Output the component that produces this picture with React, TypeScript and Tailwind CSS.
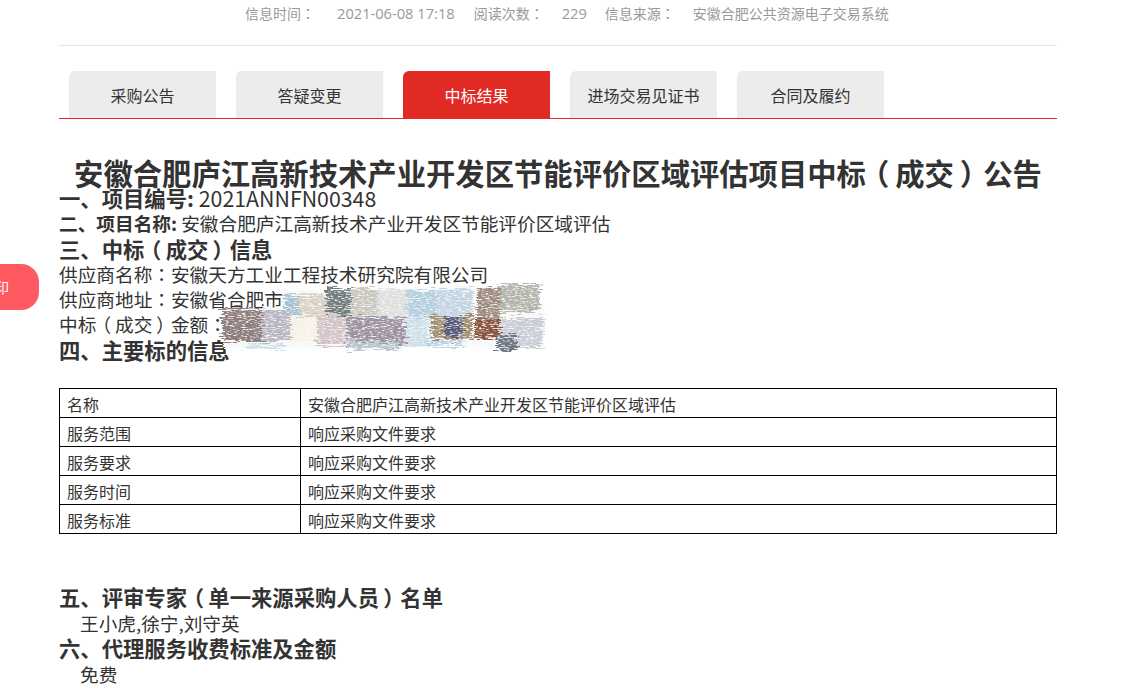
const tabs = ['采购公告', '答疑变更', '中标结果', '进场交易见证书', '合同及履约'];
const rows = [
  ['名称', '安徽合肥庐江高新技术产业开发区节能评价区域评估'],
  ['服务范围', '响应采购文件要求'],
  ['服务要求', '响应采购文件要求'],
  ['服务时间', '响应采购文件要求'],
  ['服务标准', '响应采购文件要求'],
];

// x, y, w, h, colour of the smear patches
const patches: [number, number, number, number, string][] = [
  [66, 12, 16, 24, '#a9c1d0'],
  [81, 10, 30, 26, '#d8d2c6'],
  [109, 5, 23, 31, '#737d7e'],
  [132, 5, 27, 31, '#c9c6bd'],
  [159, 6, 30, 30, '#dde0dc'],
  [189, 6, 30, 30, '#b5cfdf'],
  [219, 6, 36, 30, '#c3d5e2'],
  [259, 4, 23, 32, '#a08b80'],
  [282, 1, 40, 28, '#b4b4aa'],
  [4, 25, 40, 34, '#8f7c7c'],
  [44, 28, 28, 30, '#b9b6c4'],
  [72, 33, 27, 26, '#f7f1e6'],
  [99, 32, 30, 30, '#d3c3c6'],
  [129, 34, 58, 30, '#9d92a2'],
  [187, 34, 25, 30, '#cfdfe9'],
  [214, 33, 41, 24, '#a38f6e'],
  [226, 34, 18, 20, '#54587c'],
  [257, 36, 25, 20, '#8a533e'],
  [282, 34, 42, 30, '#c9ccd6'],
  [278, 52, 22, 15, '#6e7482'],
  [130, 58, 50, 9, '#b8c6cf'],
  [30, 60, 36, 6, '#cfe0ee'],
  [205, 58, 40, 6, '#b9d4e8'],
];

// brackets are pulled to the middle of their em box, colon comes from the TC cut
function Cn({ text }: { text: string }) {
  return (
    <>
      {text.split(/([（）：])/).map((s, i) => {
        if (i % 2 === 0) return s;
        if (s === '（') return <span key={i} className="inline-block translate-x-[-0.2em]">{s}</span>;
        if (s === '）') return <span key={i} className="inline-block translate-x-[0.2em]">{s}</span>;
        return <span key={i} className="font-['Noto_Sans_CJK_TC',sans-serif]">{s}</span>;
      })}
    </>
  );
}

export default function App() {
  return (
    <div className="relative h-[687px] w-[1132px] overflow-hidden bg-white font-['Noto_Sans_CJK_SC',sans-serif] text-[#333]">
      {/* 左侧悬浮按钮 */}
      <div className="absolute left-[-40px] top-[264px] flex h-[46px] w-[79px] items-center justify-end rounded-[18px] bg-[#ff5a62] pr-[30px] text-[14px] text-white">
        印
      </div>

      <div className="ml-[59px] w-[998px]">
        <div className="flex h-[46px] items-start border-b border-[#e5e5e5] pl-[186px] pt-[2px] text-[14px] leading-[22px] text-[#999]">
          <span><Cn text="信息时间：" /></span>
          <span className="ml-[22px] font-['Open_Sans',sans-serif] text-[14.67px]">2021-06-08 17:18</span>
          <span className="ml-[19px]"><Cn text="阅读次数：" /></span>
          <span className="ml-[18px] font-['Open_Sans',sans-serif] text-[14.67px]">229</span>
          <span className="ml-[18px]"><Cn text="信息来源：" /></span>
          <span className="ml-[18px]">安徽合肥公共资源电子交易系统</span>
        </div>

        <div className="mt-[25px] flex h-[48px] gap-[20px] border-b border-[#e62b27] pl-[10px]">
          {tabs.map((t) => (
            <div
              key={t}
              className={
                t === '中标结果'
                  ? 'flex h-[47px] w-[147px] items-center justify-center rounded-tl-[6px] bg-[#e12a24] text-[16px] text-white'
                  : 'flex h-[47px] w-[147px] items-center justify-center rounded-tl-[6px] bg-[#ececec] text-[16px] text-[#333]'
              }
            >
              {t}
            </div>
          ))}
        </div>

        <h1 className="mt-[33px] h-[40px] text-center text-[29.33px] font-bold leading-[40px]">
          <Cn text="安徽合肥庐江高新技术产业开发区节能评价区域评估项目中标（成交）公告" />
        </h1>

        <div className="mt-[-7px] text-[18.67px] leading-[25.3px]">
          <p className="text-[21.33px] font-bold">
            一、项目编号: <span className="font-normal">2021ANNFN00348</span>
          </p>
          <p>
            <b>二、项目名称:</b> 安徽合肥庐江高新技术产业开发区节能评价区域评估
          </p>
          <p className="text-[21.33px] font-bold"><Cn text="三、中标（成交）信息" /></p>
          <p><Cn text="供应商名称：安徽天方工业工程技术研究院有限公司" /></p>
          <p><Cn text="供应商地址：安徽省合肥市" /></p>
          <p><Cn text="中标（成交）金额：" /></p>
          <p className="text-[21.33px] font-bold">四、主要标的信息</p>
        </div>

        <table className="mt-[26px] w-[998px] table-fixed border-collapse text-[16px]">
          <colgroup>
            <col className="w-[241px]" />
            <col />
          </colgroup>
          <tbody>
            {rows.map(([a, b]) => (
              <tr key={a} className="h-[29px]">
                <td className="border border-black px-[7px] pt-[1px] leading-[20px]">{a}</td>
                <td className="border border-black px-[7px] pt-[1px] leading-[20px]">{b}</td>
              </tr>
            ))}
          </tbody>
        </table>

        <div className="mt-[50px] text-[18.67px] leading-[25.6px]">
          <p className="text-[21.33px] font-bold"><Cn text="五、评审专家（单一来源采购人员）名单" /></p>
          <p className="pl-[21px]">王小虎,徐宁,刘守英</p>
          <p className="text-[21.33px] font-bold">六、代理服务收费标准及金额</p>
          <p className="pl-[21px]">免费</p>
        </div>
      </div>

      {/* 涂抹遮挡 */}
      <svg className="absolute left-[218px] top-[283px]" width="332" height="72" viewBox="0 0 332 72">
        <defs>
          <filter id="smear" x="-5%" y="-10%" width="110%" height="120%">
            <feTurbulence type="fractalNoise" baseFrequency="0.05 0.9" numOctaves="3" seed="7" result="n" />
            <feDisplacementMap in="SourceGraphic" in2="n" scale="14" xChannelSelector="R" yChannelSelector="G" result="d" />
            <feGaussianBlur in="d" stdDeviation="0.7" result="b" />
            <feTurbulence type="fractalNoise" baseFrequency="0.25 1.1" numOctaves="2" seed="11" result="g" />
            <feColorMatrix in="g" type="matrix" values="0 0 0 0 0  0 0 0 0 0  0 0 0 0 0  3.5 0 0 0 -0.8" result="a" />
            <feComposite in="b" in2="a" operator="in" />
          </filter>
          <filter id="edge" x="-5%" y="-10%" width="110%" height="120%">
            <feTurbulence type="fractalNoise" baseFrequency="0.1 0.9" numOctaves="2" seed="3" result="n" />
            <feDisplacementMap in="SourceGraphic" in2="n" scale="8" />
          </filter>
        </defs>
        <path d="M66 8 L318 2 L328 30 L326 64 L6 66 L4 28 L64 24 Z" fill="#f8f9f9" filter="url(#edge)" />
        <g filter="url(#smear)">
          {patches.map(([x, y, w, h, c], i) => (
            <rect key={i} x={x} y={y} width={w} height={h} fill={c} />
          ))}
        </g>
      </svg>
    </div>
  );
}
